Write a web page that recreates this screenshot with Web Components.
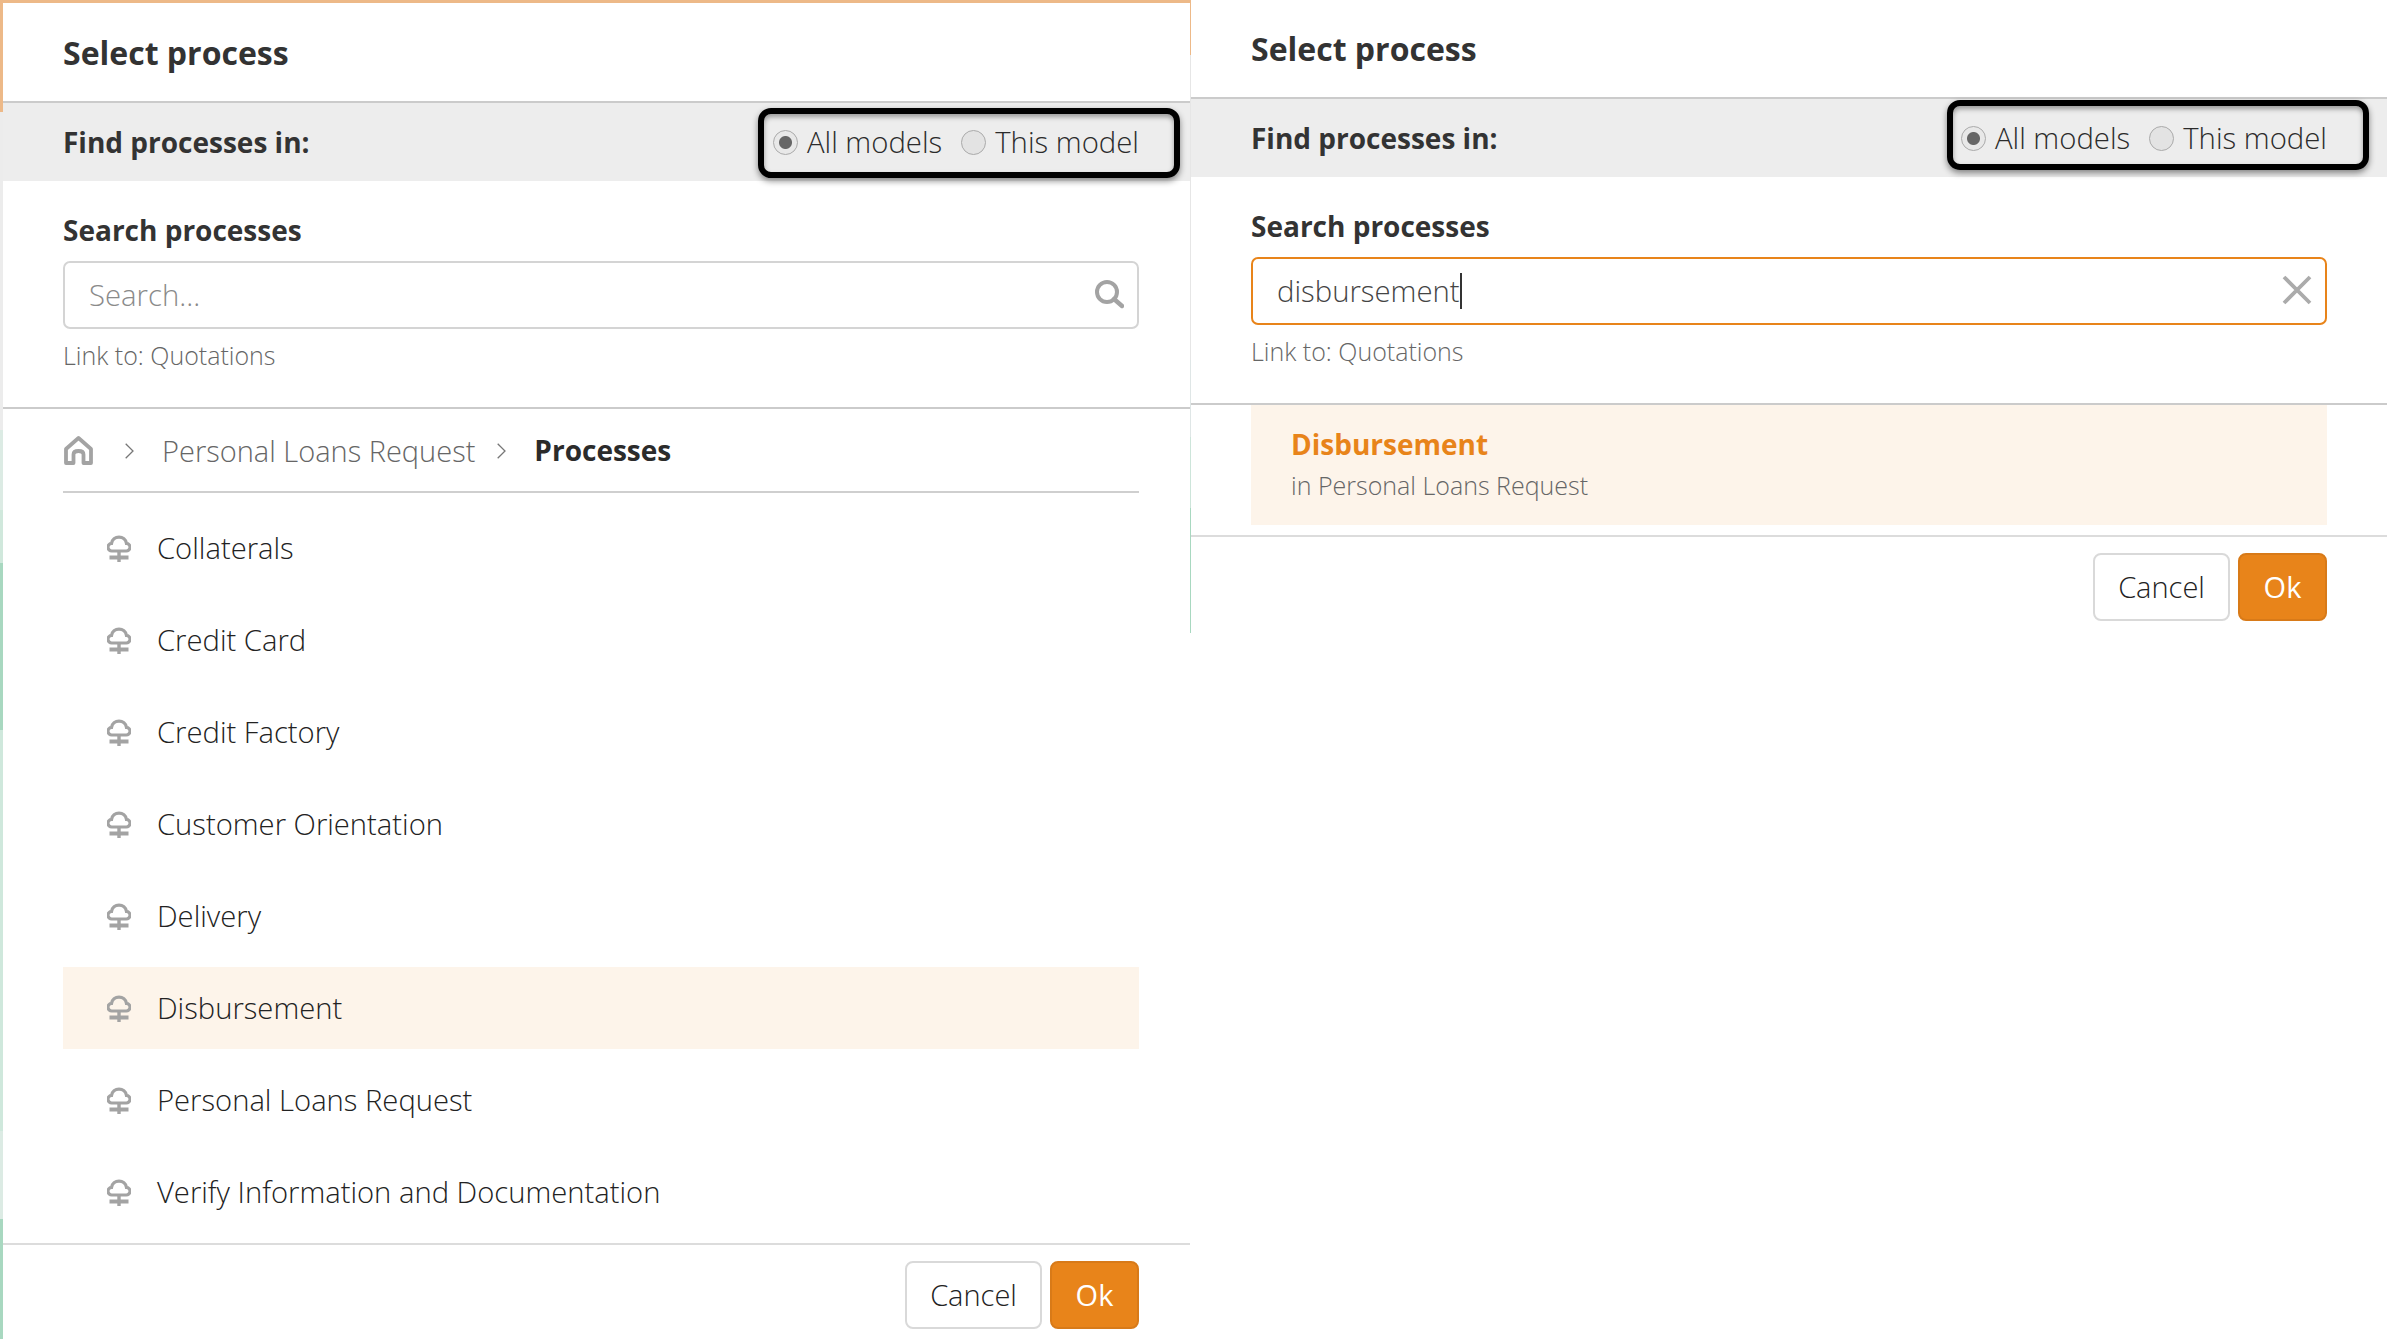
<!DOCTYPE html>
<html>
<head>
<meta charset="utf-8">
<title>Select process</title>
<style>
    html, body {
        margin: 0;
        padding: 0;
        background: #fff;
        font-family: "Open Sans", "Liberation Sans", sans-serif;
        color: #333;
    }
    .screens {
        display: grid;
        grid-template-columns: 1190px 1197px;
        align-items: start;
        height: 1339px;
        overflow: hidden;
    }
</style>
</head>
<body>
<div class="screens">
    <process-dialog class="first" header-height="101">
        <scope-bar box-top="5" box-right="10"></scope-bar>
        <search-box placeholder="Search..."></search-box>
        <bread-crumb></bread-crumb>
        <process-item>Collaterals</process-item>
        <process-item>Credit Card</process-item>
        <process-item>Credit Factory</process-item>
        <process-item>Customer Orientation</process-item>
        <process-item>Delivery</process-item>
        <process-item selected>Disbursement</process-item>
        <process-item>Personal Loans Request</process-item>
        <process-item>Verify Information and Documentation</process-item>
    </process-dialog>
    <process-dialog class="second" header-height="97">
        <scope-bar box-top="1" box-right="18"></scope-bar>
        <search-box value="disbursement" focused></search-box>
        <search-result name="Disbursement" parent="in Personal Loans Request"></search-result>
    </process-dialog>
</div>

<script>
const GRAY_ICON = '#a3a3a3';

class ProcessDialog extends HTMLElement {
    connectedCallback() {
        const shadowRoot = this.attachShadow({ mode: 'open' });
        const headerHeight = Number(this.getAttribute('header-height')) || 100;
        shadowRoot.innerHTML = `
        <style>
            :host {
                display: block;
                box-sizing: border-box;
                background: #fff;
                --gutter-left: 60px;
                --gutter-right: 60px;
            }
            /* left dialog: what is left of the page behind it shows on both edges */
            :host(.first) {
                --gutter-right: 51px;
                border-left: 3px solid;
                border-image: linear-gradient(to bottom,
                    #edb988 0 113px, #ececec 113px 430px, #dcebe4 430px 510px,
                    #d0e8dc 510px 563px, #a8d8c0 563px 730px, #cfe8dc 730px 1130px,
                    #dcebe4 1130px 1218px, #a8d8c0 1218px 1339px) 1;
            }
            :host(.second) {
                border-left: 1px solid;
                border-image: linear-gradient(to bottom,
                    #edb988 0 56px, #e6e6e6 56px 360px, #dfe6e6 360px 437px,
                    #cde5da 437px 507px, #a8d8c0 507px 633px) 1;
            }
            .top {
                height: 3px;
                background: #edb988;
                margin-right: -2px;
            }
            :host(.second) .top { display: none; }
            header {
                box-sizing: border-box;
                height: ${headerHeight}px;
                padding-left: var(--gutter-left);
                display: flex;
                align-items: center;
                font-size: 32px;
                font-weight: 700;
                color: #333;
            }
            :host(.first) header { height: ${headerHeight - 3}px; }
            footer {
                border-top: 2px solid #dcdcdc;
                padding: 16px var(--gutter-right) 12px 0;
                display: flex;
                justify-content: flex-end;
                gap: 8px;
            }
        </style>
        <div class="top"></div>
        <header>Select process</header>
        <slot></slot>
        <footer>
            <dialog-button>Cancel</dialog-button>
            <dialog-button primary>Ok</dialog-button>
        </footer>
        `;
    }
}
customElements.define('process-dialog', ProcessDialog);

class ScopeBar extends HTMLElement {
    connectedCallback() {
        const shadowRoot = this.attachShadow({ mode: 'open' });
        const boxTop = this.getAttribute('box-top');
        const boxRight = this.getAttribute('box-right');
        shadowRoot.innerHTML = `
        <style>
            :host {
                display: flex;
                position: relative;
                box-sizing: border-box;
                height: 80px;
                border-top: 2px solid #cbcbcb;
                background: #ededed;
                padding: 0 var(--gutter-right) 0 var(--gutter-left);
                align-items: center;
                justify-content: space-between;
            }
            .label {
                font-size: 28px;
                font-weight: 700;
            }
            .models {
                display: flex;
                align-items: center;
                font-size: 29.3px;
                font-weight: 300;
                color: #2b2b2b;
            }
            .radio {
                box-sizing: border-box;
                width: 25px;
                height: 25px;
                border-radius: 50%;
                border: 1px solid #aaa;
                background: #e3e3e3;
                margin-right: 9px;
                flex: none;
            }
            .radio.on {
                background: radial-gradient(circle, #666 0 6px, #e8e8e8 7px);
            }
            .opt + .radio { margin-left: 19px; }
            /* the black frame is drawn over the screenshot, it does not follow the bar */
            .frame {
                position: absolute;
                top: ${boxTop}px;
                right: ${boxRight}px;
                box-sizing: border-box;
                width: 422px;
                height: 70px;
                border: 6px solid #000;
                border-radius: 13px;
                box-shadow: 0 3px 6px rgba(0, 0, 0, .45), inset 0 3px 5px rgba(0, 0, 0, .35);
            }
        </style>
        <span class="label">Find processes in:</span>
        <div class="models">
            <span class="radio on"></span><span class="opt">All models</span>
            <span class="radio"></span><span class="opt">This model</span>
        </div>
        <div class="frame"></div>
        `;
    }
}
customElements.define('scope-bar', ScopeBar);

class SearchBox extends HTMLElement {
    connectedCallback() {
        const shadowRoot = this.attachShadow({ mode: 'open' });
        const value = this.getAttribute('value');
        const placeholder = this.getAttribute('placeholder') || '';
        const icon = value
            ? `<svg width="30" height="30" viewBox="0 0 30 30"><path d="M2 2L28 28M28 2L2 28" stroke="#ababab" stroke-width="3.8" fill="none"/></svg>`
            : `<svg width="30" height="30" viewBox="0 0 30 30"><circle cx="13" cy="13" r="10" stroke="${GRAY_ICON}" stroke-width="4" fill="none"/><path d="M20 20L28 27" stroke="${GRAY_ICON}" stroke-width="4.4" stroke-linecap="round"/></svg>`;
        shadowRoot.innerHTML = `
        <style>
            :host {
                display: block;
                box-sizing: border-box;
                height: 228px;
                padding: 0 var(--gutter-right) 0 var(--gutter-left);
                border-bottom: 2px solid #cbcbcb;
            }
            .title {
                font-size: 28px;
                font-weight: 700;
                line-height: 38px;
                padding-top: 30px;
            }
            .box {
                box-sizing: border-box;
                height: 68px;
                margin-top: 12px;
                border: 2px solid #d4d4d4;
                border-radius: 7px;
                display: flex;
                align-items: center;
                justify-content: space-between;
                padding: 0 13px 0 24px;
                font-size: 29.3px;
                font-weight: 300;
            }
            :host([focused]) .box { border-color: #e8841a; }
            .box svg { margin-top: -3px; }
            .placeholder { color: #8a8a8a; margin-top: -1px; }
            .text {
                color: #444;
                border-right: 2px solid #333;
                line-height: 36px;
            }
            .hint {
                margin-top: 9px;
                font-size: 25px;
                font-weight: 300;
                color: #666;
                line-height: 34px;
            }
        </style>
        <div class="title">Search processes</div>
        <div class="box">
            ${value ? `<span class="text">${value}</span>` : `<span class="placeholder">${placeholder}</span>`}
            ${icon}
        </div>
        <div class="hint">Link to: Quotations</div>
        `;
    }
}
customElements.define('search-box', SearchBox);

class BreadCrumb extends HTMLElement {
    connectedCallback() {
        const shadowRoot = this.attachShadow({ mode: 'open' });
        const chevron = `<svg width="9" height="16" viewBox="0 0 9 16"><path d="M.7 .7L8 8L.7 15.3" stroke="#777" stroke-width="1.3" fill="none"/></svg>`;
        shadowRoot.innerHTML = `
        <style>
            :host {
                display: flex;
                box-sizing: border-box;
                height: 84px;
                margin: 0 var(--gutter-right) 14px var(--gutter-left);
                border-bottom: 2px solid #cfcfcf;
                align-items: center;
                font-size: 29px;
                font-weight: 300;
                color: #666;
            }
            .home { margin-left: 1px; }
            .sep { display: flex; margin-top: 2px; }
            .sep.one { margin-left: 32px; }
            .sep.two { margin-left: 22px; }
            .crumb { margin-left: 28px; }
            b {
                margin-left: 28px;
                font-size: 28px;
                font-weight: 700;
                color: #2b2b2b;
            }
        </style>
        <svg class="home" width="29" height="29" viewBox="0 0 29 29"><path d="M2 27V13L14.5 2L27 13V27H19.5V18.5Q19.5 15 14.5 15T9.500 18.5V27Z" fill="none" stroke="${GRAY_ICON}" stroke-width="3.8" stroke-linejoin="round"/></svg>
        <span class="sep one">${chevron}</span>
        <span class="crumb">Personal Loans Request</span>
        <span class="sep two">${chevron}</span>
        <b>Processes</b>
        `;
    }
}
customElements.define('bread-crumb', BreadCrumb);

class ProcessItem extends HTMLElement {
    connectedCallback() {
        const shadowRoot = this.attachShadow({ mode: 'open' });
        shadowRoot.innerHTML = `
        <style>
            :host {
                display: flex;
                box-sizing: border-box;
                height: 82px;
                margin: 0 var(--gutter-right) 10px var(--gutter-left);
                padding-left: 44px;
                gap: 26px;
                align-items: center;
                font-size: 29.2px;
                font-weight: 300;
                color: #222;
            }
            :host([selected]) { background: #fdf4ea; }
            svg { flex: none; }
            span { margin-top: -1px; }
        </style>
        <svg width="24" height="28" viewBox="0 0 24 28">
            <path d="M6 17H5A3.800 3.800 0 0 1 4.500 9.400 7.600 7.600 0 0 1 19.500 9.400 3.800 3.800 0 0 1 19 17Z" fill="none" stroke="${GRAY_ICON}" stroke-width="3.200"/>
            <path d="M12 17V28" stroke="${GRAY_ICON}" stroke-width="3.400" fill="none"/>
            <path d="M2.500 23.500H21.500" stroke="${GRAY_ICON}" stroke-width="4" fill="none"/>
        </svg>
        <span><slot></slot></span>
        `;
    }
}
customElements.define('process-item', ProcessItem);

class SearchResult extends HTMLElement {
    connectedCallback() {
        const shadowRoot = this.attachShadow({ mode: 'open' });
        shadowRoot.innerHTML = `
        <style>
            :host {
                display: block;
                box-sizing: border-box;
                height: 120px;
                margin: 0 var(--gutter-right) 10px var(--gutter-left);
                padding: 20px 40px 0;
                background: #fdf4ea;
            }
            .name {
                font-size: 28px;
                font-weight: 700;
                line-height: 38px;
                color: #e8841a;
            }
            .parent {
                margin-top: 5px;
                font-size: 25px;
                font-weight: 300;
                line-height: 34px;
                color: #666;
            }
        </style>
        <div class="name">${this.getAttribute('name')}</div>
        <div class="parent">${this.getAttribute('parent')}</div>
        `;
    }
}
customElements.define('search-result', SearchResult);

class DialogButton extends HTMLElement {
    connectedCallback() {
        const shadowRoot = this.attachShadow({ mode: 'open' });
        shadowRoot.innerHTML = `
        <style>
            :host {
                display: inline-flex;
                box-sizing: border-box;
                height: 68px;
                min-width: 137px;
                padding-bottom: 2px;
                align-items: center;
                justify-content: center;
                background: #fff;
                border: 2px solid #d9d9d9;
                border-radius: 8px;
                font-size: 29px;
                font-weight: 300;
                color: #222;
            }
            :host([primary]) {
                min-width: 89px;
                background: #e8841a;
                border-color: #d87a18;
                font-weight: 400;
                color: #fff;
            }
        </style>
        <slot></slot>
        `;
    }
}
customElements.define('dialog-button', DialogButton);
</script>
</body>
</html>
